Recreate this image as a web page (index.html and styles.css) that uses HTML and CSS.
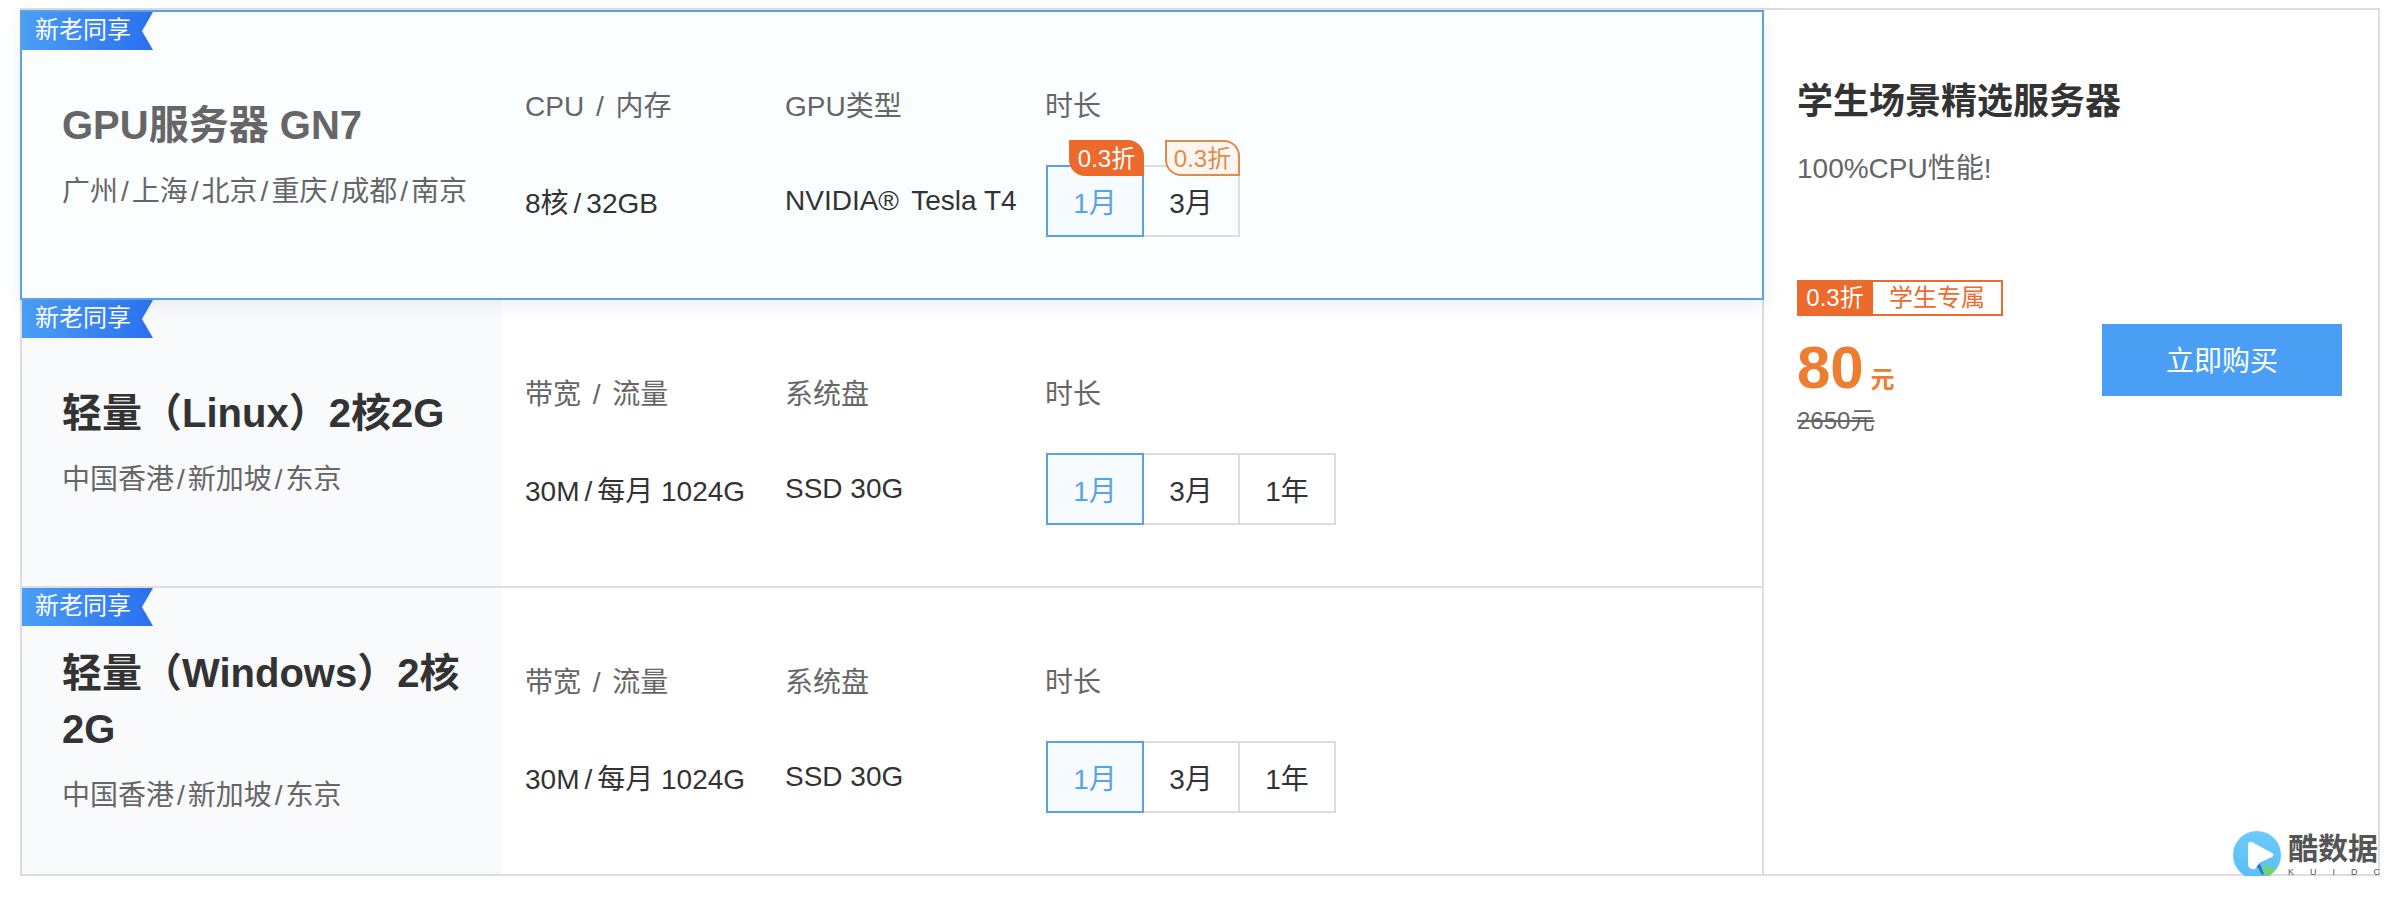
FILE: index.html
```html
<!DOCTYPE html>
<html lang="en">
<head>
<meta charset="UTF-8" />
<title>学生场景精选服务器</title>
<link rel="stylesheet" href="styles.css">
</head>
<body>

<div class="panel">
  <div class="list">

    <div class="row active">
      <div class="tag">新老同享</div>
      <div class="info">
        <div class="name">GPU服务器 GN7</div>
        <div class="area">广州<i>/</i>上海<i>/</i>北京<i>/</i>重庆<i>/</i>成都<i>/</i>南京</div>
      </div>
      <div class="specs">
        <div class="label">CPU / 内存</div>
        <div class="label">GPU类型</div>
        <div class="label">时长</div>
        <div class="value">8核<i>/</i>32GB</div>
        <div class="value">NVIDIA<span class="reg">®</span> Tesla T4</div>
        <div class="times">
          <div class="time on">1月<span class="off fill">0.3折</span></div>
          <div class="time">3月<span class="off">0.3折</span></div>
        </div>
      </div>
    </div>

    <div class="row">
      <div class="tag">新老同享</div>
      <div class="info">
        <div class="name">轻量（Linux）2核2G</div>
        <div class="area">中国香港<i>/</i>新加坡<i>/</i>东京</div>
      </div>
      <div class="specs">
        <div class="label">带宽 / 流量</div>
        <div class="label">系统盘</div>
        <div class="label">时长</div>
        <div class="value">30M<i>/</i>每月 1024G</div>
        <div class="value">SSD 30G</div>
        <div class="times">
          <div class="time on">1月</div>
          <div class="time">3月</div>
          <div class="time">1年</div>
        </div>
      </div>
    </div>

    <div class="row last">
      <div class="tag">新老同享</div>
      <div class="info">
        <div class="name">轻量（Windows）2核2G</div>
        <div class="area">中国香港<i>/</i>新加坡<i>/</i>东京</div>
      </div>
      <div class="specs">
        <div class="label">带宽 / 流量</div>
        <div class="label">系统盘</div>
        <div class="label">时长</div>
        <div class="value">30M<i>/</i>每月 1024G</div>
        <div class="value">SSD 30G</div>
        <div class="times">
          <div class="time on">1月</div>
          <div class="time">3月</div>
          <div class="time">1年</div>
        </div>
      </div>
    </div>

  </div>

  <div class="side">
    <div class="side-title">学生场景精选服务器</div>
    <div class="side-sub">100%CPU性能!</div>
    <div class="deal">
      <span class="deal-off">0.3折</span><span class="deal-name">学生专属</span>
    </div>
    <div class="buy-row">
      <div class="price-box">
        <div class="price"><b>80</b> <span>元</span></div>
        <div class="old">2650元</div>
      </div>
      <div class="buy">立即购买</div>
    </div>
  </div>

  <div class="mark">
    <svg class="mark-icon" width="48" height="48" viewBox="0 0 48 48">
      <defs>
        <linearGradient id="ball" x1="0" y1="0" x2="0" y2="1">
          <stop offset="0" stop-color="#6cc9fb"/>
          <stop offset="1" stop-color="#58c0f8"/>
        </linearGradient>
      </defs>
      <circle cx="24" cy="24" r="24" fill="url(#ball)"/>
      <path d="M15 14 Q15 10 19 11 L39 22 Q42 24 39 26 L26 32 L22 38 Q19 39 17 37 Q15 36 15 33 Z" fill="#fff"/>
      <path d="M24 35 L29 44 L31 43 L27 33 Z" fill="#3f6fb5"/>
      <path d="M29 35 L44 37 L35 47 Z" fill="#74d36b"/>
    </svg>
    <div class="mark-text">
      <div class="mark-name">酷数据</div>
      <div class="mark-en"><span>K</span><span>U</span><span>I</span><span>D</span><span>C</span></div>
    </div>
  </div>
</div>

</body>
</html>
```

FILE: styles.css
```css
html, body {
  margin: 0; padding: 0;
  background: #fff;
  font-family: "Liberation Sans", "Noto Sans CJK SC", sans-serif;
}
.panel {
  position: relative;
  display: flex;
  box-sizing: border-box;
  width: 2360px;
  height: 868px;
  margin: 8px 0 0 20px;
  border: 2px solid #ddd;
}
.list {
  width: 1740px;
  flex: none;
}
.row {
  position: relative;
  display: flex;
  height: 288px;
  box-sizing: border-box;
  border-bottom: 2px solid #ddd;
}
.row.last {
  height: 286px;
  border-bottom: 0;
}
.row.active {
  z-index: 2;
  height: 290px;
  margin-left: -2px;
  margin-right: -2px;
  border: 2px solid #5aa2e6;
  background: #fbfeff;
  box-shadow: 0 6px 16px rgba(90, 130, 190, 0.12);
}
.tag {
  position: absolute;
  top: 0; left: 0;
  width: 118px;
  height: 38px;
  padding-left: 13px;
  background: linear-gradient(90deg, #4a9ff5, #2a6ff0);
  clip-path: polygon(0 0, 131px 0, 120px 19px, 131px 38px, 0 38px);
  color: #fff;
  font-size: 24px;
  line-height: 36px;
}
.info {
  display: flex;
  flex-direction: column;
  justify-content: center;
  box-sizing: border-box;
  width: 480px;
  padding: 0 40px 2px 40px;
  background: #f9fafc;
}
.active .info {
  background: none;
}
.name {
  color: #333;
  font-size: 40px;
  font-weight: bold;
  line-height: 56px;
}
.active .name {
  color: #666;
}
.area {
  margin-top: 19px;
  color: #666;
  font-size: 28px;
  line-height: 40px;
  white-space: nowrap;
}
.area i {
  padding: 0 3px;
  font-style: normal;
}
.specs {
  display: grid;
  grid-template-columns: 260px 260px 1fr;
  grid-template-rows: 38px 72px;
  row-gap: 42px;
  align-items: center;
  padding: 73px 0 0 23px;
}
.label {
  color: #666;
  font-size: 28px;
  word-spacing: 4px;
}
.value {
  color: #333;
  font-size: 28px;
}
.value i {
  padding: 0 5px;
  font-style: normal;
}
.reg {
  padding-right: 5px;
}
.times {
  display: flex;
  padding-left: 1px;
}
.time {
  position: relative;
  box-sizing: border-box;
  width: 98px;
  height: 72px;
  margin-right: -2px;
  border: 2px solid #ddd;
  color: #333;
  font-size: 28px;
  line-height: 73px;
  text-align: center;
}
.time.on {
  z-index: 1;
  border-color: #5aa2e6;
  background: #f6fbff;
  color: #5aa2e6;
}
.off {
  position: absolute;
  top: -27px; right: -2px;
  box-sizing: border-box;
  width: 75px;
  height: 36px;
  border: 2px solid #e08a4e;
  border-radius: 0 16px 0 16px;
  background: #fdf6f0;
  color: #e08a4e;
  font-size: 24px;
  line-height: 33px;
  text-align: center;
}
.off.fill {
  border-color: #ec6a2c;
  background: #ec6a2c;
  color: #fff;
}
.side {
  flex: 1;
  padding: 0 36px 0 33px;
  border-left: 2px solid #ddd;
}
.side-title {
  margin-top: 70px;
  color: #333;
  font-size: 36px;
  font-weight: bold;
  line-height: 44px;
}
.side-sub {
  margin-top: 25px;
  color: #666;
  font-size: 28px;
  line-height: 40px;
}
.deal {
  display: flex;
  width: 206px;
  height: 36px;
  margin-top: 91px;
  font-size: 24px;
  line-height: 32px;
  text-align: center;
}
.deal-off {
  width: 76px;
  background: #ec6a2c;
  color: #fff;
  line-height: 36px;
}
.deal-name {
  flex: 1;
  border: 2px solid #ec6a2c;
  border-left: 0;
  color: #ec6a2c;
}
.buy-row {
  display: flex;
  justify-content: space-between;
  align-items: flex-start;
  margin-top: 8px;
}
.price-box {
  padding-top: 12px;
}
.price {
  color: #ed7d31;
  font-size: 24px;
  font-weight: bold;
  line-height: 64px;
}
.price b {
  font-size: 60px;
}
.old {
  margin-top: -9px;
  color: #666;
  font-size: 24px;
  line-height: 36px;
  text-decoration: line-through;
}
.buy {
  width: 240px;
  height: 72px;
  background: #4a9ff5;
  color: #fff;
  font-size: 28px;
  line-height: 75px;
  text-align: center;
}
.mark {
  position: absolute;
  right: -2px; bottom: -5px;
  display: flex;
  align-items: center;
  gap: 7px;
}
.mark-text {
  width: 92px;
}
.mark-name {
  color: #555;
  font-size: 30px;
  font-weight: bold;
  line-height: 34px;
}
.mark-en {
  display: flex;
  justify-content: space-between;
  color: #555;
  font-size: 9px;
  line-height: 12px;
}
```
